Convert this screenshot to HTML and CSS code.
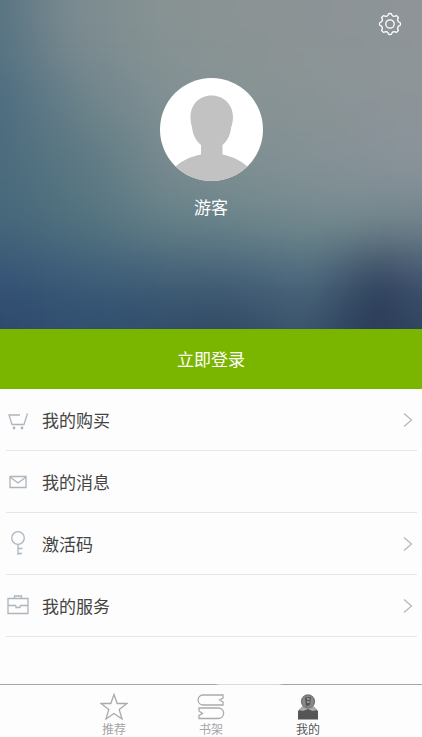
FILE: index.html
```html
<!DOCTYPE html>
<html lang="zh-CN">
<head>
<meta charset="utf-8">
<meta name="viewport" content="width=device-width, initial-scale=1">
<title>我的</title>
<link rel="stylesheet" href="styles.css">
</head>
<body>
<div class="app">
  <header class="hero">
    <svg class="backdrop" viewBox="0 0 420 330" preserveAspectRatio="none" aria-hidden="true">
      <defs>
        <filter id="soft" filterUnits="userSpaceOnUse" x="-100" y="-100" width="620" height="600" color-interpolation-filters="sRGB"><feGaussianBlur stdDeviation="12 26"/></filter>
        <linearGradient id="r1"><stop offset=".2" stop-color="#587482"/><stop offset=".3" stop-color="#7a8a90"/><stop offset=".42" stop-color="#869293"/><stop offset=".55" stop-color="#8b9394"/><stop offset=".8" stop-color="#8e9498"/></linearGradient>
        <linearGradient id="r2"><stop offset=".2" stop-color="#4c6c80"/><stop offset=".33" stop-color="#6f848b"/><stop offset=".44" stop-color="#819093"/><stop offset=".56" stop-color="#869293"/><stop offset=".8" stop-color="#8d9498"/></linearGradient>
        <linearGradient id="r3"><stop offset=".2" stop-color="#4a6b7d"/><stop offset=".33" stop-color="#5d7983"/><stop offset=".44" stop-color="#778a8f"/><stop offset=".56" stop-color="#7f8f92"/><stop offset=".8" stop-color="#89929a"/></linearGradient>
        <linearGradient id="r4"><stop offset=".2" stop-color="#446679"/><stop offset=".33" stop-color="#53737f"/><stop offset=".44" stop-color="#637f87"/><stop offset=".56" stop-color="#6c858b"/><stop offset=".68" stop-color="#738a8e"/><stop offset=".8" stop-color="#70838b"/></linearGradient>
        <linearGradient id="r5"><stop offset=".2" stop-color="#345377"/><stop offset=".33" stop-color="#3b5c78"/><stop offset=".44" stop-color="#415f77"/><stop offset=".52" stop-color="#425f77"/><stop offset=".64" stop-color="#4b687c"/><stop offset=".74" stop-color="#31435f"/><stop offset=".8" stop-color="#40536d"/></linearGradient>
        <linearGradient id="r6"><stop offset=".2" stop-color="#2f486b"/><stop offset=".33" stop-color="#304f70"/><stop offset=".52" stop-color="#314964"/><stop offset=".63" stop-color="#3b546d"/><stop offset=".73" stop-color="#293b57"/><stop offset=".8" stop-color="#304360"/></linearGradient>
      </defs>
      <g filter="url(#soft)">
        <rect x="-140" y="-140" width="700" height="206" fill="url(#r1)"/>
        <rect x="-140" y="66" width="700" height="66" fill="url(#r2)"/>
        <rect x="-140" y="132" width="700" height="66" fill="url(#r3)"/>
        <rect x="-140" y="198" width="700" height="54" fill="url(#r4)"/>
        <rect x="-140" y="252" width="700" height="53" fill="url(#r5)"/>
        <rect x="-140" y="305" width="700" height="195" fill="url(#r6)"/>
      </g>
    </svg>
    <button class="settings" type="button" aria-label="设置">
      <svg width="24" height="24" viewBox="-12 -12 24 24" fill="none" stroke="currentColor" stroke-width="1.3" stroke-linejoin="round">
        <path d="M-2.5-8.2Q-1.9-8.8-1.7-9.7Q-1.4-10.5 0-10.5Q1.4-10.5 1.7-9.7Q1.9-8.8 2.5-8.2L4-7.6Q5-7.6 5.8-8.2L6.5-8.4L8.4-6.5L8.2-5.8Q7.6-5 7.6-4L8.2-2.5Q8.8-1.9 9.7-1.7Q10.5-1.4 10.5 0Q10.5 1.4 9.7 1.7Q8.8 1.9 8.2 2.5L7.6 4Q7.6 5 8.2 5.8L8.4 6.5L6.5 8.4L5.8 8.2Q5 7.6 4 7.6L2.5 8.2Q1.9 8.8 1.7 9.7Q1.4 10.5 0 10.5Q-1.4 10.5-1.7 9.7Q-1.9 8.8-2.5 8.2L-4 7.6Q-5 7.6-5.8 8.2L-6.5 8.4L-8.4 6.5L-8.2 5.8Q-7.6 5-7.6 4L-8.2 2.5Q-8.8 1.9-9.7 1.7Q-10.5 1.4-10.5 0Q-10.5-1.4-9.7-1.7Q-8.8-1.9-8.2-2.5L-7.6-4Q-7.6-5-8.2-5.8L-8.4-6.5L-6.5-8.4L-5.8-8.2Q-5-7.6-4-7.6Z"/>
        <circle r="4.2"/>
      </svg>
    </button>
    <svg class="avatar" viewBox="0 0 103 103" aria-hidden="true">
      <defs><clipPath id="disc"><circle cx="51.5" cy="51.5" r="51.5"/></clipPath></defs>
      <circle cx="51.5" cy="51.5" r="51.5" fill="#fff"/>
      <path clip-path="url(#disc)" fill="#c2c2c2" d="M51.5 17.5C64 17.5 73 27 73 39C73 43 72 47 71 50C70.500 57 67 63.500 62.500 67V76.500C72 78.500 81 82.500 88 89V103H15V89C22 82.500 31 78.500 41 76.500V67C36 63 32.500 56 32 49C31 46 30.500 43 30.500 39C30.500 27 39 17.500 51.500 17.500Z"/>
    </svg>
    <p class="name">游客</p>
  </header>
  <button class="login" type="button">立即登录</button>
  <main class="menu">
    <a class="row" href="#orders">
      <svg class="icon" viewBox="0 0 24 24"><path d="M14 7H3L6 16.500H18L21.500 5.500"/><circle class="dot" cx="8" cy="20" r="1.400"/><circle class="dot" cx="16" cy="20" r="1.400"/></svg>
      <span class="label">我的购买</span>
      <svg class="chevron" viewBox="0 0 10 16"><path d="M1 1.500L8.500 8L1 14.500"/></svg>
    </a>
    <a class="row" href="#messages">
      <svg class="icon" viewBox="0 0 24 24"><path d="M4 6.500H20V17.500H4ZM4 7L12 13L20 7"/></svg>
      <span class="label">我的消息</span>
    </a>
    <a class="row" href="#code">
      <svg class="icon" viewBox="0 0 24 24"><circle cx="12" cy="6" r="6.300"/><path d="M12 12.500V23M12 16.500H16.500M12 21.500H16"/></svg>
      <span class="label">激活码</span>
      <svg class="chevron" viewBox="0 0 10 16"><path d="M1 1.500L8.500 8L1 14.500"/></svg>
    </a>
    <a class="row" href="#services">
      <svg class="icon" viewBox="0 0 24 24"><path d="M2 4.500H22V19.500H2ZM8.500 4.500V2H15.500V4.500M2 11.500H10M14 11.500H22M10 11.500V13.500H14V11.500"/></svg>
      <span class="label">我的服务</span>
      <svg class="chevron" viewBox="0 0 10 16"><path d="M1 1.500L8.500 8L1 14.500"/></svg>
    </a>
  </main>
  <nav class="tabs">
    <a class="tab" href="#recommend">
      <svg class="tab-icon" viewBox="0 0 28 28"><path d="M14 1.500L17.200 10.500H27L19.200 16.500L22 26L14 20.500L6 26L8.800 16.500L1 10.500H10.800Z"/></svg>
      <span>推荐</span>
    </a>
    <a class="tab" href="#shelf">
      <svg class="tab-icon" viewBox="0 0 28 28"><path d="M26 2H6C-.5 2-.5 12 6 12H26V9L22.500 7L26 5ZM2 15H21C28.500 15 28.500 25.500 21 25.500H2V22.500L5.500 20.500L2 18Z"/></svg>
      <span>书架</span>
    </a>
    <a class="tab active" href="#me" aria-current="page">
      <svg class="tab-icon" viewBox="0 0 28 28">
        <path class="solid" d="M4 26.500V18L9 14H19L24 18V26.500Z"/>
        <path class="collar" d="M4.500 17L8.500 13H19.500L23.500 17L18.500 18L14 16L9 18Z"/>
        <circle class="head" cx="14" cy="8.500" r="6.500"/>
        <path class="solid" d="M11 4.500L17 4L16 12L12 13.500Z"/>
        <path class="shine" d="M13 6H15.500M13 9H15.500"/>
      </svg>
      <span>我的</span>
    </a>
  </nav>
</div>
</body>
</html>
```
FILE: styles.css
```css
* { box-sizing: border-box; }

body {
  margin: 0;
  background: #fdfdfd;
  color: #444;
  font-family: "Noto Sans CJK SC", sans-serif;
  font-size: 17px;
  line-height: 24px;
}

a { color: inherit; text-decoration: none; }

button {
  border: 0;
  color: #fff;
  font: inherit;
  cursor: pointer;
}

.app {
  display: flex;
  flex-direction: column;
  min-height: 100vh;
}

.hero {
  position: relative;
  z-index: 0;
  display: flex;
  flex-direction: column;
  align-items: center;
  padding: 12px 20px 110px;
  overflow: hidden;
}

.backdrop {
  position: absolute;
  inset: 0;
  z-index: -1;
  width: 100%;
  height: 100%;
}

.settings {
  align-self: flex-end;
  width: 24px;
  height: 24px;
  padding: 0;
  background: none;
}

.settings svg { display: block; }

.avatar {
  width: 103px;
  height: 103px;
  margin-top: 42px;
}

.name {
  margin: 14px 0 0;
  color: #fff;
}

.login {
  height: 60px;
  padding: 0;
  background: #7ab500;
}

.menu {
  flex: 1;
  padding: 0 5px 0 6px;
}

.row {
  display: flex;
  align-items: center;
  height: 62px;
  border-bottom: 1px solid #e6e6e6;
}

.icon {
  width: 24px;
  height: 24px;
  overflow: visible;
  fill: none;
  stroke: #adb5bd;
  stroke-width: 1.3;
}

.dot { fill: #adb5bd; stroke: none; }

.label {
  flex: 1;
  margin-left: 12px;
}

.chevron {
  width: 10px;
  height: 16px;
  margin-right: 4px;
  fill: none;
  stroke: #b4b9bf;
  stroke-width: 1.3;
}

.tabs {
  display: flex;
  justify-content: center;
  height: 53px;
  padding-top: 9px;
  background: linear-gradient(to right, #a6a6a6 51%, #dcdcdc 52% 66%, #a6a6a6 67%) top / 100% 1px no-repeat;
  color: #a5a5a5;
  font-size: 12px;
  line-height: 16px;
}

.tab {
  display: flex;
  flex-direction: column;
  align-items: center;
  width: 23%;
}

.tab-icon {
  width: 28px;
  height: 28px;
  fill: none;
  stroke: #aaa;
  stroke-width: 1.3;
}

.active { color: #555; }
.active .tab-icon { stroke: none; }
.solid { fill: #555; }
.collar { fill: #aaa; }
.head { fill: #888; stroke: #777; }
.shine { stroke: #aaa; }
```
